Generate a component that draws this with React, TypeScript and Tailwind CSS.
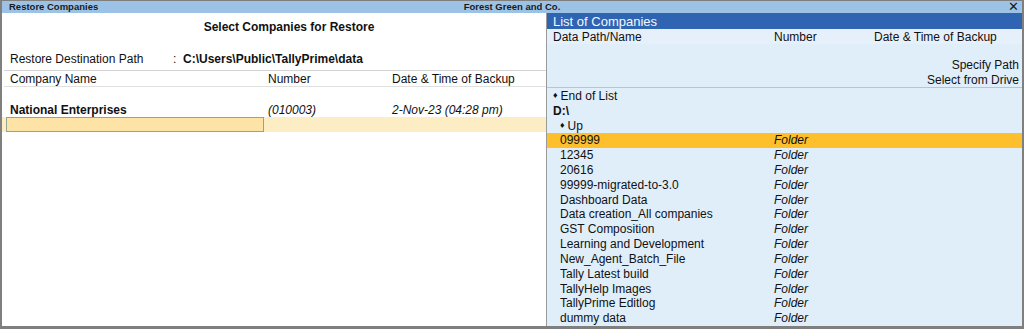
import React from "react";

const folders = [
  "099999",
  "12345",
  "20616",
  "99999-migrated-to-3.0",
  "Dashboard Data",
  "Data creation_All companies",
  "GST Composition",
  "Learning and Development",
  "New_Agent_Batch_File",
  "Tally Latest build",
  "TallyHelp Images",
  "TallyPrime Editlog",
  "dummy data",
];

export default function App() {
  return (
    <div
      className="w-[1024px] h-[329px] bg-[#7f7f7f] pt-[1px] pl-[2px] pr-[2px] pb-[3px] flex flex-col overflow-hidden text-[#111]"
      style={{ fontFamily: '"Liberation Sans", Arial, sans-serif' }}
    >
      {/* Title bar */}
      <div className="h-[12px] bg-[#9cc3e6] flex items-center relative text-[9.5px] font-bold leading-none text-[#1a1a1a]">
        <div className="pl-[7px] w-[300px]">Restore Companies</div>
        <div className="flex-1 text-center pr-[300px]">Forest Green and Co.</div>
        <div className="absolute right-[3px] top-[-1px] text-[13px] font-normal">✕</div>
      </div>

      <div className="flex-1 flex min-h-0">
        {/* Left panel */}
        <div className="w-[544px] bg-white flex flex-col text-[12px] leading-none">
          <div className="h-[7px] shrink-0" />
          <div className="h-[14px] flex items-center justify-center pl-[30px] font-bold">
            Select Companies for Restore
          </div>
          <div className="h-[18px] shrink-0" />
          <div className="h-[14px] flex items-center">
            <div className="pl-[8px] w-[171px]">Restore Destination Path</div>
            <div className="w-[10px]">:</div>
            <div className="font-bold">C:\Users\Public\TallyPrime\data</div>
          </div>
          <div className="h-[4px] shrink-0" />
          <div className="h-[1px] bg-[#d4d4d4] ml-[2px]" />
          <div className="h-[15px] flex items-center">
            <div className="pl-[8px] w-[266px]">Company Name</div>
            <div className="w-[124px]">Number</div>
            <div>Date &amp; Time of Backup</div>
          </div>
          <div className="h-[1px] bg-[#e0e0e0] ml-[2px]" />
          <div className="h-[15px] shrink-0" />
          <div className="h-[15px] flex items-center">
            <div className="pl-[8px] w-[266px] font-bold">National Enterprises</div>
            <div className="w-[124px] italic">(010003)</div>
            <div className="italic">2-Nov-23 (04:28 pm)</div>
          </div>
          <div className="h-[15px] flex bg-[#fdedc4]">
            <div className="ml-[4px] w-[258px] h-[15px] bg-[#fde3a6] border border-[#8fa596]" />
          </div>
        </div>

        {/* Right panel */}
        <div className="flex-1 bg-[#e0eefa] border-l border-[#9a9a9a] flex flex-col text-[12px] leading-none">
          <div className="h-[16px] bg-[#2f64b3] text-[#f4f8ff] text-[13px] flex items-center pl-[6px]">
            List of Companies
          </div>
          <div className="h-[14.8px] flex items-center bg-[#e6f0fa] pt-[1px]">
            <div className="pl-[6px] w-[227px]">Data Path/Name</div>
            <div className="w-[100px]">Number</div>
            <div>Date &amp; Time of Backup</div>
          </div>
          <div className="h-[14px] shrink-0" />
          <div className="h-[14.83px] flex items-center justify-end pr-[3px]">Specify Path</div>
          <div className="h-[14.83px] flex items-center justify-end pr-[3px]">Select from Drive</div>
          <div className="h-[1px] bg-[#b9c4cf]" />
          <div className="h-[14.83px] flex items-center pl-[6px]">
            <span className="text-[9px] mr-[3px]">♦</span>End of List
          </div>
          <div className="h-[14.83px] flex items-center pl-[6px] font-bold">D:\</div>
          <div className="h-[14.83px] flex items-center pl-[13px]">
            <span className="text-[9px] mr-[3px]">♦</span>Up
          </div>
          {folders.map((f, i) => (
            <div
              key={f}
              className={
                i === 0
                  ? "h-[14.83px] shrink-0 flex items-center bg-[#fdc02c]"
                  : "h-[14.83px] shrink-0 flex items-center"
              }
            >
              <div className="pl-[13px] w-[227px]">{f}</div>
              <div className="italic">Folder</div>
            </div>
          ))}
        </div>
      </div>
    </div>
  );
}
